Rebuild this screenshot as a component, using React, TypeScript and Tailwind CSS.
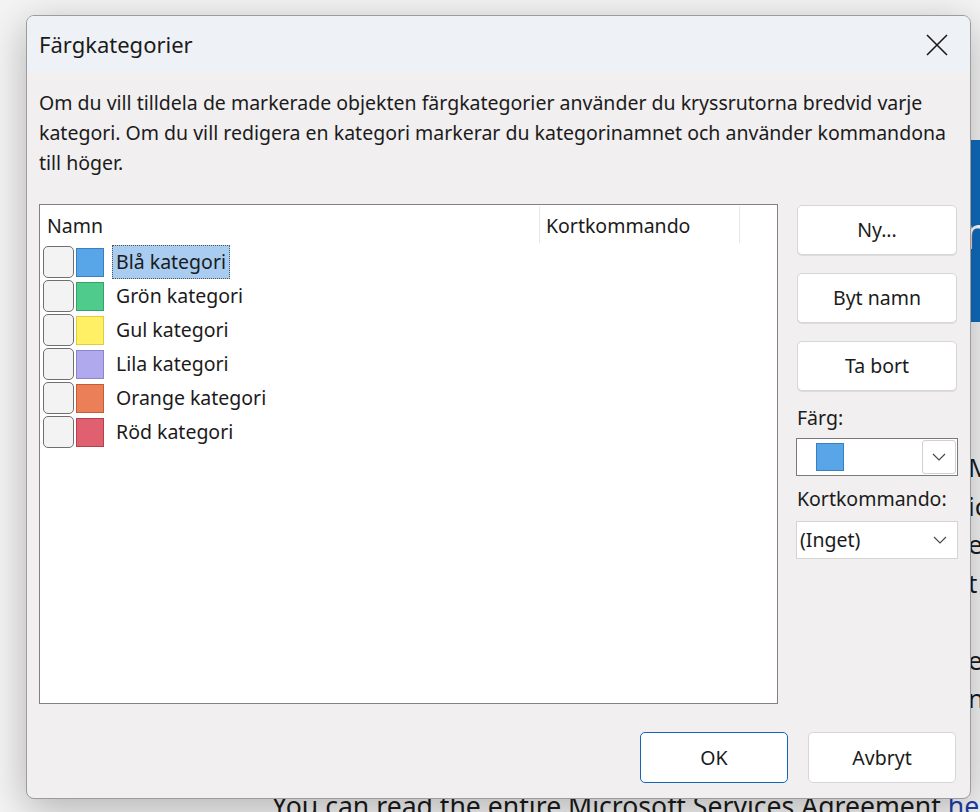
import React from 'react'

const FONT = { fontFamily: '"Noto Sans", "Open Sans", sans-serif' }

const categories = [
  { name: 'Blå kategori', color: 'bg-[#58a6e8]', border: 'border-[#3c7fc0]' },
  { name: 'Grön kategori', color: 'bg-[#4fcc8b]', border: 'border-[#35a268]' },
  { name: 'Gul kategori', color: 'bg-[#fff066]', border: 'border-[#e2cc3c]' },
  { name: 'Lila kategori', color: 'bg-[#b1a9ee]', border: 'border-[#8d84cf]' },
  { name: 'Orange kategori', color: 'bg-[#eb8058]', border: 'border-[#c45c37]' },
  { name: 'Röd kategori', color: 'bg-[#e0606f]', border: 'border-[#b73e4d]' },
]

function Chevron() {
  return (
    <svg width="14" height="8" viewBox="0 0 14 8" fill="none">
      <path d="M1 1l6 6 6-6" stroke="#444" strokeWidth="1.1" />
    </svg>
  )
}

function CloseIcon() {
  return (
    <svg width="22" height="22" viewBox="0 0 22 22" fill="none">
      <path d="M1 1l20 20M21 1L1 21" stroke="#1a1a1a" strokeWidth="1.6" />
    </svg>
  )
}

function SideButton({ label }: { label: string }) {
  return (
    <button className="h-[50px] w-[160px] rounded-[5px] border border-[#d6d6d6] bg-white text-[19.5px] text-[#1b1b1b] shadow-[0_1px_0_rgba(0,0,0,0.08)]">
      {label}
    </button>
  )
}

export default function App() {
  return (
    <div className="relative h-[812px] w-[980px] overflow-hidden bg-[#f4f4f4]" style={FONT}>
      {/* page behind the dialog */}
      <div className="absolute left-[900px] top-[140px] h-[182px] w-[80px] bg-[#0f6cbd]">
        <span className="absolute left-[64px] top-[70px] text-[44px] leading-none text-white">m</span>
      </div>
      <div className="absolute left-[968px] top-[448px] text-[26px] leading-[38.5px] text-[#1b1b1b]">
        <div>M</div>
        <div>ic</div>
        <div>e</div>
        <div>t</div>
        <div>&nbsp;</div>
        <div>e</div>
        <div>n</div>
      </div>
      <div className="absolute left-[272px] top-[788px] whitespace-nowrap text-[26.6px] leading-[36px] text-[#1b1b1b]">
        You can read the entire Microsoft Services Agreement <span className="text-[#1a3ea8]">here</span>
      </div>

      {/* dialog */}
      <div className="relative ml-[26px] mt-[15px] flex h-[784px] w-[945px] flex-col overflow-hidden rounded-[8px] border border-[#9c9c9c] bg-[#f1efef] shadow-[0_10px_40px_rgba(0,0,0,0.28)]">
        <div className="flex h-[57px] shrink-0 items-center justify-between bg-[#eef2f6] pl-[12px] pr-[22px]">
          <span className="text-[22px] text-[#1b1b1b]">Färgkategorier</span>
          <CloseIcon />
        </div>

        <div className="flex flex-1 flex-col px-[12px]">
          <p className="mt-[15px] whitespace-nowrap text-[19.5px] leading-[30px] text-[#1b1b1b]">
            Om du vill tilldela de markerade objekten färgkategorier använder du kryssrutorna bredvid varje
            <br />
            kategori. Om du vill redigera en kategori markerar du kategorinamnet och använder kommandona
            <br />
            till höger.
          </p>

          <div className="mt-[26px] flex gap-[19px]">
            {/* list */}
            <div className="h-[500px] w-[739px] border border-[#828282] bg-white">
              <div className="flex h-[40px] items-start pt-[1px] text-[19.5px] text-[#1b1b1b]">
                <div className="flex h-[37px] w-[500px] items-center border-r border-[#e8e8e8] pl-[7px] pt-[3px]">Namn</div>
                <div className="flex h-[37px] w-[200px] items-center border-r border-[#e8e8e8] pl-[6px] pt-[3px]">Kortkommando</div>
              </div>
              {categories.map((c, i) => (
                <div key={c.name} className="flex h-[34px] items-center pl-[3px]">
                  <div className="h-[32px] w-[31px] rounded-[5px] border-[1.5px] border-[#6f6f6f] bg-[#f3f3f3]" />
                  <div className={`ml-[2px] h-[29px] w-[28px] border ${c.color} ${c.border}`} />
                  <div
                    className={
                      i === 0
                        ? 'ml-[8px] flex h-[34px] items-center bg-[#a8cdf0] px-[4px] text-[19.5px] text-[#1b1b1b] outline-1 outline-dotted outline-offset-[-1px] outline-[#555]'
                        : 'ml-[8px] flex h-[34px] items-center px-[4px] text-[19.5px] text-[#1b1b1b]'
                    }
                  >
                    {c.name}
                  </div>
                </div>
              ))}
            </div>

            {/* side commands */}
            <div className="flex flex-col pt-[1px]">
              <div className="flex flex-col gap-[18px]">
                <SideButton label="Ny..." />
                <SideButton label="Byt namn" />
                <SideButton label="Ta bort" />
              </div>
              <div className="mt-[14px] text-[19.5px] leading-[26px] text-[#1b1b1b]">Färg:</div>
              <div className="mt-[7px] flex h-[38px] w-[162px] -ml-[1px] items-center border border-[#7a7a7a] bg-white pl-[19px] pr-[1px]">
                <div className="h-[28px] w-[28px] border border-[#3c7fc0] bg-[#58a6e8]" />
                <div className="ml-auto flex h-[34px] w-[34px] items-center justify-center rounded-[3px] border border-[#d0d0d0] bg-white">
                  <Chevron />
                </div>
              </div>
              <div className="mt-[10px] text-[19.5px] leading-[26px] text-[#1b1b1b]">Kortkommando:</div>
              <div className="mt-[9px] flex h-[38px] w-[162px] -ml-[1px] items-center border border-[#d4d4d4] bg-white pl-[3px] pr-[10px] text-[19.5px] text-[#1b1b1b]">
                <span>(Inget)</span>
                <span className="ml-auto"><Chevron /></span>
              </div>
            </div>
          </div>

          <div className="mt-[28px] flex justify-end gap-[20px] pr-[2px]">
            <button className="h-[51px] w-[148px] rounded-[5px] border border-[#1366b8] bg-white text-[19.5px] text-[#1b1b1b]">OK</button>
            <button className="h-[51px] w-[148px] rounded-[5px] border border-[#d6d6d6] bg-white text-[19.5px] text-[#1b1b1b]">Avbryt</button>
          </div>
        </div>
      </div>
    </div>
  )
}
